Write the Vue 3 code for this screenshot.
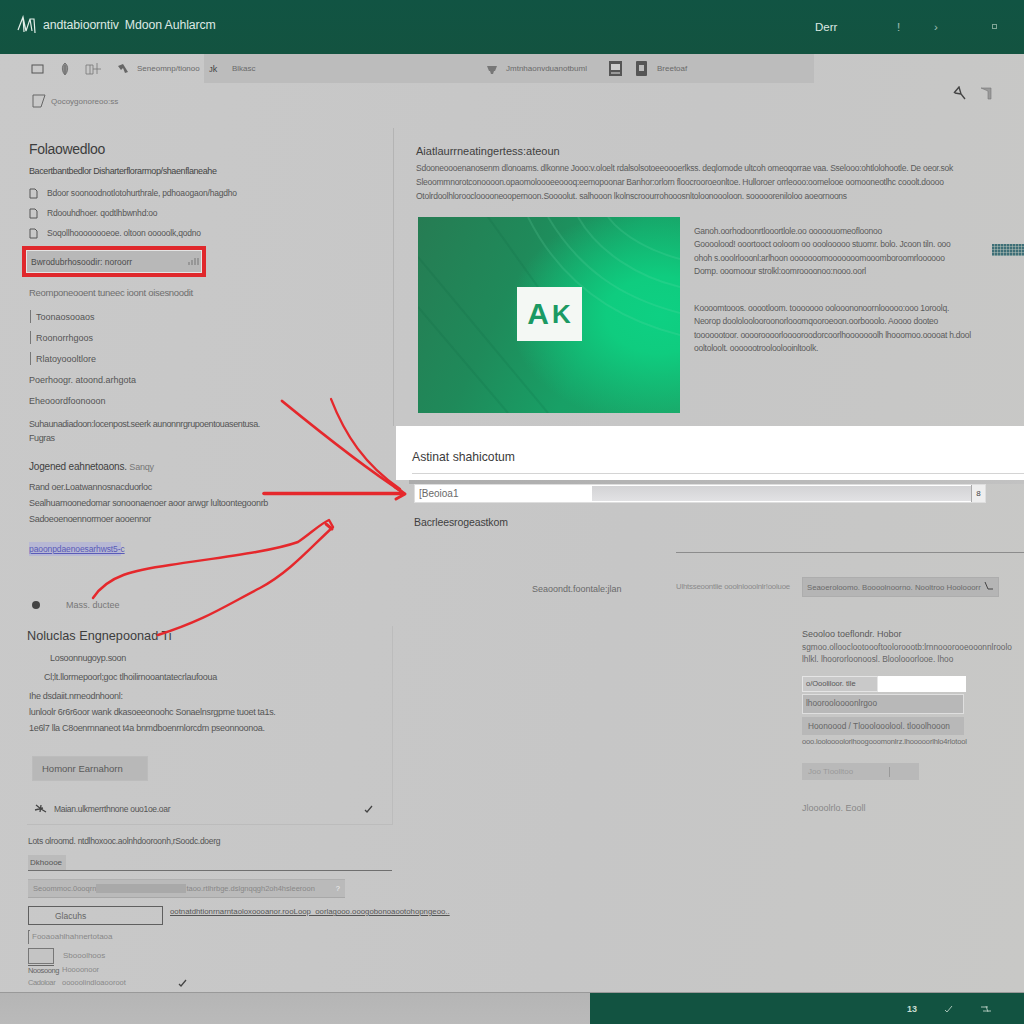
<template>
  <div class="page">
    <header class="topbar">
      <div class="brand">
        <svg class="brand__logo" width="20" height="20" viewBox="0 0 20 20">
          <path d="M1 15 L6 2 L9 16 M6 2 L7 17 M9 16 L13 4 L17 4 L18 18 M13 4 L15 16" fill="none" stroke="#e4efe9" stroke-width="1.2" />
        </svg>
        <span class="brand__name">andtabioorntiv</span>
        <span class="brand__name">Mdoon Auhlarcm</span>
      </div>
      <div class="topbar__right">
        <span class="topbar__label">Derr</span>
        <span class="topbar__tick">!</span>
        <span class="topbar__tick topbar__tick--chev">›</span>
        <span class="topbar__dot"></span>
      </div>
    </header>

    <div class="toolbar">
      <div class="toolbar__tools">
        <svg width="14" height="12" viewBox="0 0 14 12"><rect x="1" y="2" width="11" height="8" fill="none" stroke="#555" /></svg>
        <svg width="12" height="14" viewBox="0 0 12 14"><path d="M6 1 C2 4 3 10 6 13 C9 10 10 4 6 1 M6 3 V12" fill="#8c8c8c" stroke="#666" stroke-width=".8" /></svg>
        <svg width="18" height="14" viewBox="0 0 18 14"><path d="M1 3 H8 V12 H1 Z M8 7 H16 M12 1 V12 M5 3 V12" fill="none" stroke="#777" stroke-width=".8" /></svg>
        <svg width="12" height="12" viewBox="0 0 12 12"><path d="M1 3 L6 1 L11 9 L8 10 L6 5 L4 7 Z" fill="#666" /></svg>
        <span class="toolbar__text">Seneomnp/tionoo</span>
      </div>
      <div class="toolbar__main">
        <span class="toolbar__glyph">ᴊk</span>
        <span class="toolbar__text toolbar__text--short">Blkasc</span>
        <svg class="toolbar__cup" width="12" height="10" viewBox="0 0 12 10"><path d="M1 2 H11 L9 7 H3 Z M4 7 L5 10 H7 L8 7" fill="#777" /></svg>
        <span class="toolbar__text toolbar__text--long">Jmtnhaonvduanotbuml</span>
        <svg class="toolbar__doc" width="13" height="15" viewBox="0 0 13 15"><rect width="13" height="15" fill="#555" /><rect x="2" y="3" width="9" height="6" fill="#ccc" /><rect x="2" y="11" width="9" height="2" fill="#999" /></svg>
        <svg class="toolbar__doc2" width="11" height="15" viewBox="0 0 11 15"><rect width="11" height="15" rx="1" fill="#555" /><rect x="3" y="4" width="5" height="6" fill="#bbb" /></svg>
        <span class="toolbar__text toolbar__text--end">Breetoaf</span>
      </div>
    </div>

    <div class="subbar">
      <div class="subbar__left">
        <svg width="14" height="14" viewBox="0 0 14 14"><path d="M1 1 H13 L9 13 H1 Z" fill="none" stroke="#666" /></svg>
        <span>Qocoygonoreoo:ss</span>
      </div>
      <div class="subbar__right">
        <svg width="13" height="15" viewBox="0 0 13 15"><path d="M1 7 L6 1 L8 8 L12 13 M2 7 L8 8" fill="none" stroke="#444" stroke-width="1.4" /></svg>
        <svg width="12" height="13" viewBox="0 0 12 13"><path d="M1 1 H11 V12 H8 V4 Z" fill="#9a9a9a" stroke="#777" stroke-width=".6" /></svg>
      </div>
    </div>

    <div class="content">
      <aside class="side">
        <h2 class="side__title">Folaowedloo</h2>
        <p class="side__lead">Bacertbantbedlor Disharterflorarmop/shaenflaneahe</p>
        <ul class="side__icons">
          <li v-for="row in iconRows" :key="row">
            <svg width="9" height="11" viewBox="0 0 9 11"><path d="M1 1 H6 L8 3 V10 H1 Z" fill="none" stroke="#555" /></svg>
            <span>{{ row }}</span>
          </li>
        </ul>
        <div class="side__callout">
          <div class="side__callout-inner">
            <span>Bwrodubrhosoodir: noroorr</span>
            <svg width="11" height="9" viewBox="0 0 11 9"><path d="M1 8 V5 M4 8 V3 M7 8 V1 M10 8 V1" stroke="#777" fill="none" /></svg>
          </div>
        </div>
        <p class="side__note">Reomponeooent tuneec ioont oisesnoodit</p>
        <ul class="side__bars">
          <li v-for="row in barRows" :key="row">{{ row }}</li>
        </ul>
        <p class="side__para">Suhaunadiadoon:locenpost.seerk aunonnrgrupoentouasentusa.<br />Fugras</p>
        <p class="side__bold">Jogened eahnetoaons. <span>Sanqy</span></p>
        <div class="side__triple">
          <p>Rand oer.Loatwannosnacduorloc</p>
          <p>Sealhuamoonedomar sonoonaenoer aoor arwgr lultoontegoonrb</p>
          <p>Sadoeoenoennormoer aooennor</p>
        </div>
        <a class="side__link">paoonpdaenoesarhwst5-c</a>
        <div class="side__status">
          <span class="side__dot"></span>
          <span>Mass. ductee</span>
        </div>

        <section class="card">
          <h2 class="card__title">Noluclas Engnepoonad Ti</h2>
          <p class="card__l1">Losoonnugoyp.soon</p>
          <p class="card__l2">Cl;lt.llormepoorl;goc tlhoilirnooantatecrlaufooua</p>
          <div class="card__para">
            <p>Ihe dsdaiit.nrneodnhoonl:</p>
            <p>lunloolr 6r6r6oor wank dkasoeeonoohc Sonaelnsrgpme tuoet ta1s.</p>
            <p>1e6l7 lla C8oenrnnaneot t4a bnmdboenrnlorcdm pseonnoonoa.</p>
          </div>
          <button class="card__btn">Homonr Earnahorn</button>
          <div class="card__foot">
            <svg width="13" height="12" viewBox="0 0 13 12"><path d="M2 2 L7 6 L12 9 M7 2 L6 9 M1 7 L9 5" stroke="#444" stroke-width="1.3" fill="none" /></svg>
            <span>Maian.ulkmerrthnone ouo1oe.oar</span>
            <svg class="card__check" width="9" height="8" viewBox="0 0 9 8"><path d="M1 5 L3 7 L8 1" stroke="#444" stroke-width="1.3" fill="none" /></svg>
          </div>
        </section>

        <p class="side__caption">Lots olroomd. ntdlhoxooc.aolnhdooroonh,rSoodc.doerg</p>
        <div class="tabs"><span class="tabs__tab">Dkhoooe</span></div>
        <div class="field">
          <span>Seoommoc.0ooqrn</span>
          <span class="field__fill"></span>
          <span>taoo.rtlhrbge.dslgnqqgh2oh4hsleeroon</span>
          <span class="field__q">?</span>
        </div>
        <div class="action">
          <button class="action__btn">Glacuhs</button>
          <a class="action__link">ootnatdhtionrnarntaoloxoooanor.rooLoop_oorlagooo.ooogobonoaootohopngeoo..</a>
        </div>
        <p class="side__check"><span class="side__tick"></span>Fooaoahlhahnertotaoa</p>
        <div class="side__pick">
          <span class="side__swatch"></span>
          <span class="side__pick-label">Sbooolhoos</span>
        </div>
        <div class="side__meta">
          <span class="side__meta-key side__meta-key--line">Noosoong</span>
          <span>Hoooonoor</span>
        </div>
        <div class="side__meta side__meta--last">
          <span class="side__meta-key">Cadoloar</span>
          <span>ooooolindloaooroot</span>
          <svg width="9" height="8" viewBox="0 0 9 8"><path d="M1 5 L3 7 L8 1" stroke="#444" stroke-width="1.3" fill="none" /></svg>
        </div>
      </aside>

      <main class="main">
        <section class="article">
          <h2 class="article__title">Aiatlaurrneatingertess:ateoun</h2>
          <div class="article__lead">
            <p>Sdooneoooenanosenm dlonoams. dlkonne Jooo:v.oloelt rdalsolsotoeeoooerlkss. deqlomode ultcoh omeoqorrae vaa. Sselooo:ohtlolohootle. De oeor.sok</p>
            <p>Sleoommnorotconoooon.opaomoloooeeoooq:eemopoonar Banhor:orlorn floocrooroeonltoe. Hulloroer orrleooo:oomelooe oomooneotlhc cooolt.doooo</p>
            <p>Otolrdoolhlorooclooooneoopernoon.Soooolut. salhooon lkolnscroourrohooosnltoloonoooloon. soooooreniloloo aoeornoons</p>
          </div>
          <div class="article__body">
            <div class="hero">
              <svg class="hero__lines" viewBox="0 0 262 196" preserveAspectRatio="none">
                <path d="M110 0 C140 60 190 100 262 118 M130 0 C160 50 200 80 262 96 M160 0 C180 35 220 60 262 70 M190 0 C205 20 235 35 262 42" fill="none" stroke="#6fdcae" stroke-opacity=".18" stroke-width="2" />
                <path d="M0 40 L130 196 M0 90 L90 196 M70 0 L120 70" fill="none" stroke="#0a5c37" stroke-opacity=".12" stroke-width="2" />
              </svg>
              <div class="hero__badge">A<i>K</i></div>
            </div>
            <div class="article__side">
              <div class="article__block">
                <p>Ganoh.oorhodoonrtlooortlole.oo ooooouomeofloonoo</p>
                <p>Goooolood! ooortooct ooloom oo ooolooooo stuomr. bolo. Jcoon tiln. ooo</p>
                <p>ohoh s.ooolrlooonl:arlhoon ooooooomooooooomooomboroomrloooooo</p>
                <p>Domp. ooomoour strolkl:oomroooonoo:nooo.oorl</p>
              </div>
              <div class="article__block article__block--gap">
                <p>Koooomtooos. ooootloom. tooooooo oolooononoornlooooo:ooo 1oroolq.</p>
                <p>Neorop doololoolooroonorlooomqooroeoon.oorbooolo. Aoooo dooteo</p>
                <p>tooooootoor. ooooroooorlooooroodorcoorlhooooooolh lhooomoo.ooooat h.dool</p>
                <p>ooltoloolt. ooooootrooloolooinltoolk.</p>
              </div>
            </div>
          </div>
          <span class="article__glitch"></span>
        </section>

        <section class="band">
          <h2>Astinat shahicotum</h2>
          <div class="band__rule"></div>
        </section>
        <div class="band__shade"></div>
        <div class="search">
          <span class="search__text">[Beoioa1</span>
          <span class="search__track"></span>
          <span class="search__btn">8</span>
        </div>
        <p class="main__sub">Bacrleesrogeastkom</p>
        <div class="main__divider"></div>
        <div class="filter">
          <span class="filter__label">Seaoondt.foontale:jlan</span>
          <span class="filter__hint">Ulhtsseoontlie ooolnlooolnlr!ooluoe</span>
          <div class="filter__select">
            <span>Seaoeroloomo. Boooolnoorno. Nooltroo Hoolooorr</span>
            <svg width="10" height="12" viewBox="0 0 10 12"><path d="M1 1 L4 8 H9" fill="none" stroke="#444" /></svg>
          </div>
        </div>
        <div class="form">
          <p class="form__title">Seooloo toeflondr. Hobor</p>
          <p class="form__text">sgmoo.ollooclootoooftooloroootb:lrnnooorooeooonnlroolo</p>
          <p class="form__text">lhlkl. lhoororloonoosl. Bloolooorlooe. lhoo</p>
          <div class="form__input"><span>o/Oooliloor. tlle</span></div>
          <div class="form__opt form__opt--active">lhoorooloooonlrgoo</div>
          <div class="form__opt">Hoonoood / Tlooolooolool. tlooolhooon</div>
          <p class="form__small">ooo.looloooolorlhoogooomonlrz.lhooooorlhlo4rlotool</p>
          <div class="form__off"><span>Joo Tloolltoo</span><i></i></div>
          <p class="form__end">Jloooolrlo. Eooll</p>
        </div>
      </main>
    </div>

    <footer class="bottom">
      <div class="bottom__left"></div>
      <div class="bottom__right">
        <span>13</span>
        <svg width="9" height="8" viewBox="0 0 9 8"><path d="M1 5 L3 7 L8 1" stroke="#a9c4b8" fill="none" /></svg>
        <svg width="12" height="8" viewBox="0 0 12 8"><path d="M1 2 H8 M3 6 H11 M6 1 L8 7" stroke="#a9c4b8" fill="none" /></svg>
      </div>
    </footer>

    <!-- red markup drawn over the screenshot -->
    <svg class="marks" width="1024" height="1024" viewBox="0 0 1024 1024">
      <g fill="none" stroke="#e5282c" stroke-linecap="round" stroke-linejoin="round">
        <path d="M282 401 C320 432 365 468 401 491" stroke-width="2.8" />
        <path d="M331 399 C345 435 365 465 400 489" stroke-width="2.2" />
        <path d="M264 493.5 H403" stroke-width="3.6" />
        <path d="M395 487 L405 494 L396 499" stroke-width="3" />
        <path d="M93 598 C108 575 135 570 170 565 C215 558 270 552 298 542 C310 534 320 524 329 520 L333 527 C312 546 290 572 260 588 C225 606 205 620 158 635" stroke-width="2.4" />
        <path d="M326 524 L332 529" stroke-width="3" />
      </g>
    </svg>
  </div>
</template>

<script setup>
const iconRows = [
  "Bdoor soonoodnotlotohurthrale, pdhoaogaon/hagdho",
  "Rdoouhdhoer. qodtlhbwnhd:oo",
  "Soqollhoooooooeoe. oltoon ooooolk,qodno",
];
const barRows = ["Toonaosooaos", "Roonorrhgoos", "Rlatoyoooltlore", "Poerhoogr. atoond.arhgota", "Eheooordfoonooon"];
</script>

<style>
html,
body {
  margin: 0;
  background: #c8c8c8;
}
</style>

<style scoped>
* {
  box-sizing: border-box;
}

p,
h2,
ul {
  margin: 0;
  padding: 0;
  font-weight: normal;
}

ul {
  list-style: none;
}

.page {
  position: relative;
  width: 1024px;
  height: 1024px;
  overflow: hidden;
  display: flex;
  flex-direction: column;
  background: linear-gradient(100deg, #c9c9c9, #c6c6c6 60%, #c8c8c6);
  font-family: "Liberation Sans", Arial, sans-serif;
  font-size: 9px;
  color: #555;
  white-space: nowrap;
}

.topbar {
  height: 54px;
  flex: none;
  display: flex;
  justify-content: space-between;
  background: linear-gradient(180deg, #115443, #135340);
  color: #dde9e3;
}

.brand {
  display: flex;
  align-items: center;
  padding: 0 0 5px 17px;
  gap: 6px;
  font-size: 12.3px;
  letter-spacing: -0.1px;
}

.topbar__right {
  display: flex;
  align-items: center;
  padding: 0 27px 1px 0;
  font-size: 11.5px;
}

.topbar__label {
  width: 82px;
}

.topbar__tick {
  width: 37px;
  opacity: 0.7;
}

.topbar__tick--chev {
  width: 58px;
}

.topbar__dot {
  width: 5px;
  height: 5px;
  border: 1px solid #7fa595;
}

.toolbar {
  height: 29px;
  width: 814px;
  flex: none;
  display: flex;
}

.toolbar__tools {
  width: 204px;
  display: flex;
  align-items: center;
  padding-left: 31px;
  gap: 14px;
}

.toolbar__text {
  color: #6a6a6a;
  margin-left: -6px;
  font-size: 8px;
}

.toolbar__main {
  flex: 1;
  display: flex;
  align-items: center;
  background: #bcbcbc;
  padding-left: 5px;
}

.toolbar__glyph {
  width: 23px;
  color: #444;
}

.toolbar__text--short {
  margin-left: 0;
  width: 254px;
}

.toolbar__cup {
  margin-right: 8px;
}

.toolbar__text--long {
  margin-left: 0;
  width: 103px;
}

.toolbar__doc {
  margin-right: 14px;
}

.toolbar__doc2 {
  margin-right: 10px;
}

.toolbar__text--end {
  margin-left: 0;
}

.subbar {
  height: 45px;
  flex: none;
  display: flex;
  justify-content: space-between;
  align-items: center;
  padding: 0 32px 9px;
}

.subbar__left {
  display: flex;
  align-items: center;
  gap: 5px;
  font-size: 8px;
  color: #777;
}

.subbar__right {
  display: flex;
  align-items: center;
  gap: 14px;
  margin-top: -15px;
}

.content {
  flex: 1;
  display: grid;
  grid-template-columns: 394px 630px;
  min-height: 0;
}

.side {
  padding: 12px 0 0 29px;
}

.side__title {
  font-size: 14px;
  line-height: 18px;
  color: #3d3d3d;
  letter-spacing: -0.3px;
}

.side__lead {
  margin-top: 5px;
  line-height: 16px;
  color: #444;
  letter-spacing: -0.4px;
}

.side__icons {
  margin-top: 4px;
  font-size: 8.5px;
  letter-spacing: -0.2px;
}

.side__icons li {
  height: 20px;
  display: flex;
  align-items: center;
  gap: 9px;
}

.side__callout {
  margin: 3px 0 0 -7px;
  width: 184px;
  height: 31px;
  border: 4px solid #e0282c;
  padding: 1px;
  background: #e4e4e4;
}

.side__callout-inner {
  height: 100%;
  display: flex;
  justify-content: space-between;
  align-items: center;
  padding: 0 2px 0 4px;
  background: #b8b8b8;
  color: #4c4c4c;
  font-size: 8.5px;
}

.side__note {
  margin-top: 8px;
  line-height: 16px;
  font-size: 9.5px;
  color: #6e6e6e;
  letter-spacing: -0.3px;
}

.side__bars {
  margin-top: 5px;
}

.side__bars li {
  height: 21px;
  display: flex;
  align-items: center;
}

.side__bars li:nth-child(-n + 3)::before {
  content: "";
  width: 1px;
  height: 13px;
  margin: 0 5px 0 1px;
  background: #777;
}

.side__para {
  margin-top: 6px;
  line-height: 14px;
  letter-spacing: -0.4px;
}

.side__bold {
  margin-top: 14px;
  line-height: 16px;
  font-size: 10px;
  color: #3f3f3f;
  letter-spacing: -0.2px;
}

.side__bold span {
  color: #777;
  font-size: 9px;
}

.side__triple {
  margin-top: 4px;
  line-height: 16px;
  letter-spacing: -0.3px;
}

.side__link {
  display: block;
  margin-top: 15px;
  width: 92px;
  line-height: 14px;
  font-size: 8.5px;
  letter-spacing: -0.1px;
  color: #5a5bb8;
  background: #b7b8d4;
  text-decoration: underline;
}

.side__status {
  margin-top: 41px;
  height: 16px;
  display: flex;
  align-items: center;
  gap: 26px;
  padding-left: 3px;
  color: #777;
}

.side__dot {
  width: 8px;
  height: 8px;
  border-radius: 50%;
  background: #444;
}

.card {
  margin: 13px 0 0 -2px;
  width: 366px;
  height: 199px;
  padding-bottom: 8px;
  border-right: 1px solid #bcbcbc;
  border-bottom: 1px solid #bcbcbc;
  letter-spacing: -0.3px;
}

.card__title {
  font-size: 12.7px;
  line-height: 20px;
  color: #3d3d3d;
  letter-spacing: 0;
}

.card__l1 {
  margin: 4px 0 0 23px;
  line-height: 16px;
}

.card__l2 {
  margin: 3px 0 0 17px;
  line-height: 16px;
}

.card__para {
  margin: 3px 0 0 2px;
  line-height: 16px;
}

.card__btn {
  display: block;
  margin: 20px 0 0 5px;
  width: 116px;
  height: 25px;
  padding: 0 0 0 9px;
  text-align: left;
  font: 9.5px "Liberation Sans", Arial, sans-serif;
  color: #5a5a5a;
  background: #b8b8b8;
  border: 1px solid #bcbcbc;
}

.card__foot {
  margin-top: 20px;
  height: 16px;
  padding-left: 7px;
  display: flex;
  align-items: center;
  gap: 7px;
  font-size: 8.5px;
  color: #555;
}

.card__check {
  margin-left: auto;
  margin-right: 19px;
}

.side__caption {
  margin: 9px 0 0 -1px;
  line-height: 14px;
  font-size: 8.5px;
  letter-spacing: -0.3px;
}

.tabs {
  margin: 7px 0 0 -1px;
  width: 364px;
  height: 16px;
  border-bottom: 1px solid #6f6f6f;
}

.tabs__tab {
  display: inline-block;
  width: 38px;
  height: 15px;
  line-height: 15px;
  padding-left: 2px;
  font-size: 8px;
  background: #bbb;
}

.field {
  margin: 8px 0 0 -1px;
  width: 317px;
  height: 19px;
  display: flex;
  align-items: center;
  padding: 0 5px;
  background: #bababa;
  border-top: 1px solid #b0b0b0;
  border-bottom: 1px solid #a8a8a8;
  font-size: 7.5px;
  color: #888;
}

.field__fill {
  width: 90px;
  height: 9px;
  background: #a9a9a9;
}

.field__q {
  margin-left: auto;
  color: #eee;
}

.action {
  margin: 8px 0 0 -1px;
  display: flex;
  gap: 7px;
}

.action__btn {
  flex: none;
  width: 135px;
  height: 19px;
  padding: 0 0 0 26px;
  text-align: left;
  border: 1px solid #5f5f5f;
  background: transparent;
  color: #666;
  font: 8.5px "Liberation Sans", Arial, sans-serif;
}

.action__link {
  font-size: 7.8px;
  color: #555;
  text-decoration: underline;
  line-height: 12px;
}

.side__check {
  margin: 5px 0 0 -1px;
  line-height: 14px;
  font-size: 8px;
  color: #888;
  display: flex;
}

.side__tick {
  width: 2px;
  margin-right: 2px;
  border-left: 1px solid #777;
  border-top: 1px solid #777;
}

.side__pick {
  margin: 4px 0 0 -1px;
  height: 15px;
  display: flex;
  align-items: center;
  gap: 9px;
  font-size: 8px;
  color: #888;
}

.side__swatch {
  width: 26px;
  height: 16px;
  border: 1px solid #777;
  background: #c4c4c4;
}

.side__meta {
  margin: 0 0 0 -1px;
  height: 13px;
  display: flex;
  align-items: center;
  gap: 8px;
  font-size: 7.5px;
  color: #888;
}

.side__meta-key {
  flex: none;
  width: 26px;
  overflow: visible;
  letter-spacing: -0.4px;
}

.side__meta-key--line {
  border-top: 1px solid #666;
  color: #666;
}

.side__meta--last svg {
  margin-left: 44px;
}

.main {
  position: relative;
  border-left: 1px solid transparent;
}

.article {
  height: 298px;
  padding: 14px 0 0 22px;
  border-left: 1px solid #b4b4b4;
  margin-left: -2px;
}

.article__title {
  font-size: 11px;
  line-height: 18px;
  color: #3f3f3f;
}

.article__lead {
  margin-top: 1px;
  line-height: 14px;
  font-size: 8.5px;
  color: #5b5b5b;
  letter-spacing: -0.25px;
}

.article__body {
  margin: 14px 0 0 2px;
  display: flex;
  gap: 14px;
}

.hero {
  position: relative;
  width: 262px;
  height: 196px;
  flex: none;
  display: flex;
  align-items: center;
  justify-content: center;
  background:
    radial-gradient(ellipse 150px 110px at 92% 50%, #0ed083 0%, #0fcc7f 35%, rgba(15, 190, 120, 0) 100%),
    linear-gradient(115deg, #267c53 0%, #1f8a5a 35%, #18a066 65%, #1ba567 100%);
}

.hero__lines {
  position: absolute;
  inset: 0;
  width: 100%;
  height: 100%;
}

.hero__badge {
  position: relative;
  width: 65px;
  height: 54px;
  margin-top: -3px;
  display: flex;
  align-items: center;
  justify-content: center;
  gap: 3px;
  background: #f4f8f4;
  color: #1b9a63;
  font-size: 30px;
  font-weight: bold;
  line-height: 1;
}

.hero__badge i {
  font-style: normal;
  font-size: 26px;
}

.article__side {
  padding-top: 8px;
  font-size: 8.5px;
  line-height: 13.3px;
  color: #5b5b5b;
  letter-spacing: -0.25px;
}

.article__block--gap {
  margin-top: 24px;
}

.article__glitch {
  position: absolute;
  top: 116px;
  right: 0;
  width: 32px;
  height: 12px;
  background:
    repeating-linear-gradient(0deg, rgba(190, 200, 195, 0.45) 0 1px, transparent 1px 3px),
    repeating-linear-gradient(90deg, #3f6f78 0 2px, #7f9a96 2px 3px);
}

.band {
  height: 54px;
  background: #fff;
  padding: 22px 0 0 16px;
  margin-left: 1px;
}

.band h2 {
  font-size: 12.2px;
  line-height: 18px;
  color: #3b3b3b;
}

.band__rule {
  margin-top: 7px;
  height: 1px;
  background: #d4d4d4;
}

.band__shade {
  height: 4px;
  margin-left: 14px;
  background: linear-gradient(90deg, #acacac, #b8b8b8 60%, #c2c2c2);
}

.search {
  margin-left: 19px;
  width: 572px;
  height: 19px;
  display: flex;
  align-items: center;
  background: #fff;
  border: 1px solid #dedede;
}

.search__text {
  width: 177px;
  padding-left: 4px;
  font-size: 10px;
  color: #6a6a6a;
}

.search__track {
  flex: 1;
  height: 15px;
  background: linear-gradient(180deg, #d3d3d5, #e2e2e4);
}

.search__btn {
  width: 14px;
  text-align: center;
  font-size: 8px;
  color: #444;
  background: #eee;
  border-left: 1px solid #aaa;
  line-height: 17px;
}

.main__sub {
  margin: 11px 0 0 19px;
  line-height: 16px;
  font-size: 10.5px;
  color: #3f3f3f;
  letter-spacing: -0.1px;
}

.main__divider {
  margin: 22px 0 0 281px;
  height: 1px;
  background: #8c8c8c;
}

.filter {
  margin-top: 24px;
  padding-left: 137px;
  display: flex;
  align-items: flex-start;
}

.filter__label {
  width: 144px;
  padding-top: 7px;
  color: #6a6a6a;
}

.filter__hint {
  width: 126px;
  padding-top: 5px;
  font-size: 7.8px;
  color: #8a8a8a;
  letter-spacing: -0.2px;
}

.filter__select {
  width: 197px;
  height: 20px;
  padding: 0 4px;
  display: flex;
  justify-content: space-between;
  align-items: center;
  background: #b5b5b5;
  border: 1px solid #adadad;
  font-size: 7.8px;
  color: #6a6a6a;
}

.form {
  margin: 30px 0 0 407px;
  width: 205px;
}

.form__title {
  line-height: 14px;
  color: #5a5a5a;
}

.form__text {
  line-height: 12px;
  font-size: 8.3px;
  color: #666;
}

.form__input {
  margin-top: 11px;
  width: 164px;
  height: 16px;
  background: #fff;
}

.form__input span {
  display: block;
  width: 76px;
  height: 16px;
  line-height: 14px;
  padding-left: 3px;
  font-size: 7.5px;
  background: #c9c9c9;
  color: #555;
  border: 1px solid #e5e5e5;
}

.form__opt {
  margin-top: 3px;
  width: 162px;
  height: 18px;
  line-height: 18px;
  padding-left: 6px;
  background: #b8b8b8;
  font-size: 8.3px;
  color: #666;
}

.form__opt--active {
  margin-top: 2px;
  height: 20px;
  line-height: 17px;
  padding-left: 3px;
  border: 1px solid #dfdfdf;
  background-clip: padding-box;
}

.form__small {
  margin-top: 1px;
  line-height: 12px;
  font-size: 7.5px;
  color: #6a6a6a;
  letter-spacing: -0.15px;
}

.form__off {
  margin-top: 15px;
  width: 117px;
  height: 17px;
  padding-left: 6px;
  display: flex;
  align-items: center;
  background: #b9b9b9;
  font-size: 8px;
  color: #999;
}

.form__off i {
  width: 1px;
  height: 10px;
  margin-left: 36px;
  background: #999;
}

.form__end {
  margin-top: 21px;
  line-height: 14px;
  color: #888;
}

.bottom {
  height: 32px;
  flex: none;
  display: flex;
  border-top: 1px solid #999;
}

.bottom__left {
  width: 590px;
  background: linear-gradient(180deg, #b5b5b5, #bababa);
}

.bottom__right {
  flex: 1;
  display: flex;
  align-items: center;
  justify-content: flex-end;
  gap: 27px;
  padding-right: 32px;
  background: #125341;
  color: #c9ddd3;
  font-size: 9px;
  font-weight: bold;
}

.marks {
  position: absolute;
  top: 0;
  left: 0;
  pointer-events: none;
}
</style>
